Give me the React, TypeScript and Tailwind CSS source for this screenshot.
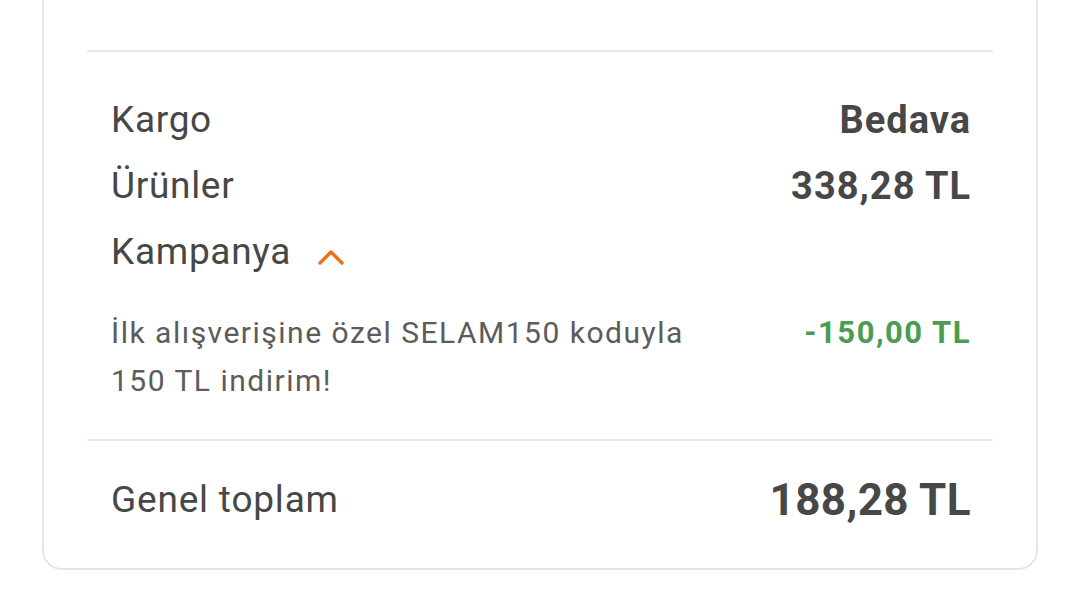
import React from "react";

const SummaryRow: React.FC<{ label: string; value: string }> = ({ label, value }) => (
  <div className="flex items-center justify-between pl-6 pr-[22px] leading-[66px]">
    <span className="text-[37px] tracking-[0.7px] text-[#474747]">{label}</span>
    <span className="text-[38px] font-bold tracking-[1px] text-[#474747]">{value}</span>
  </div>
);

export default function App() {
  return (
    <div className="min-h-[610px] bg-white font-['Roboto',sans-serif]">
      <div className="mx-[42px] rounded-b-[20px] border-x-2 border-b-2 border-[#e6e6e6] px-[43px] pt-[50px] pb-[35px]">
        <div className="h-[2px] bg-[#e8e8e8]" />

        <div className="mt-[35px]">
          <SummaryRow label="Kargo" value="Bedava" />
          <SummaryRow label="Ürünler" value="338,28 TL" />
          <div className="flex items-center pl-6 leading-[66px]">
            <span className="text-[37px] tracking-[0.7px] text-[#474747]">Kampanya</span>
            {/* kampanya detayı açık */}
            <svg className="ml-[26px] mt-[10px]" width="28" height="18" viewBox="0 0 28 18" fill="none">
              <polyline
                points="3,15 14,4 25,15"
                stroke="#e8731e"
                strokeWidth="3.5"
                strokeLinecap="round"
                strokeLinejoin="round"
              />
            </svg>
          </div>
        </div>

        <div className="mt-[24px] mb-[34px] flex justify-between pl-6 pr-[22px]">
          <p className="text-[30px] leading-[48px] tracking-[1.5px] text-[#5c5c5c]">
            İlk alışverişine özel SELAM150 koduyla
            <br />
            150 TL indirim!
          </p>
          <span className="text-[31px] font-bold leading-[48px] tracking-[1.5px] text-[#4a9c50]">-150,00 TL</span>
        </div>

        <div className="h-[2px] bg-[#e8e8e8]" />

        <div className="mt-[26px] flex items-center justify-between pl-6 pr-[22px] leading-[66px]">
          <span className="text-[37px] tracking-[0.8px] text-[#474747]">Genel toplam</span>
          <span className="text-[44px] font-bold tracking-[0.4px] text-[#474747]">188,28 TL</span>
        </div>
      </div>
    </div>
  );
}
